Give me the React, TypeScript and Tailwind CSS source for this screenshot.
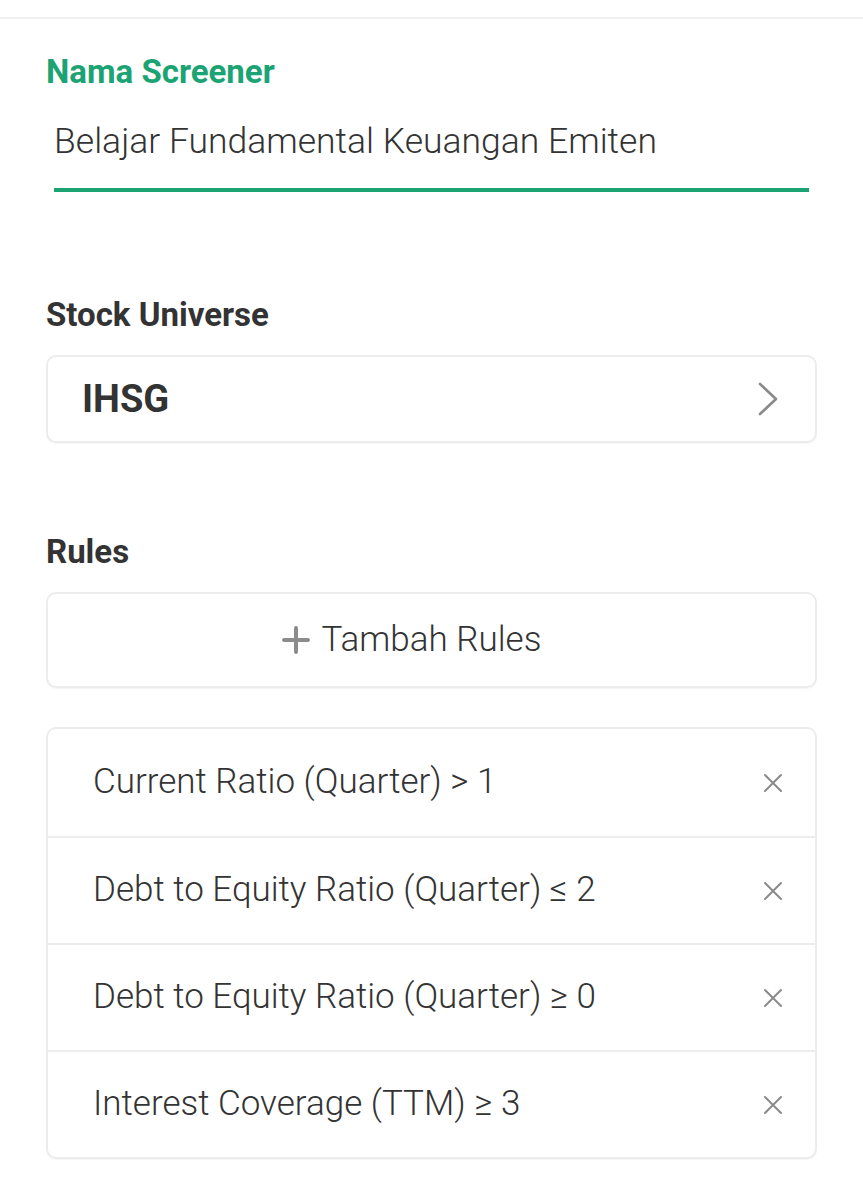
import React from 'react';

const rules = [
  'Current Ratio (Quarter) > 1',
  'Debt to Equity Ratio (Quarter) ≤ 2',
  'Debt to Equity Ratio (Quarter) ≥ 0',
  'Interest Coverage (TTM) ≥ 3',
];

function Chevron() {
  return (
    <svg width="22" height="34" viewBox="0 0 22 34" fill="none">
      <path d="M3 2 L19 17 L3 32" stroke="#8a8a8a" strokeWidth="2.6" strokeLinecap="round" strokeLinejoin="round" />
    </svg>
  );
}

function Plus() {
  return (
    <svg width="28" height="28" viewBox="0 0 28 28" fill="none">
      <path d="M14 2 V26 M2 14 H26" stroke="#8c8c8c" strokeWidth="4" strokeLinecap="round" />
    </svg>
  );
}

function Close() {
  return (
    <svg width="20" height="20" viewBox="0 0 20 20" fill="none">
      <path d="M2 2 L18 18 M18 2 L2 18" stroke="#8a8a8a" strokeWidth="2" strokeLinecap="round" />
    </svg>
  );
}

export default function App() {
  return (
    <div className="min-h-[1200px] bg-white text-[#333333]" style={{ fontFamily: 'Roboto, "Liberation Sans", sans-serif' }}>
      <div className="h-[17px]" />
      <div className="h-[2px] bg-[#efefef]" />

      <div className="px-[46px]">
        {/* Nama Screener */}
        <div className="pt-[35px] text-[33px] font-bold leading-[36px] text-[#1ba373]">Nama Screener</div>
        <div className="px-[8px]">
          <div className="mt-[31px] text-[35.5px] font-light leading-[40px]">Belajar Fundamental Keuangan Emiten</div>
          <div className="mt-[27px] h-[4px] bg-[#1ba373]" />
        </div>

        {/* Stock Universe */}
        <div className="mt-[105px] text-[33px] font-bold leading-[36px]">Stock Universe</div>
        <div className="mt-[22px] flex h-[88px] items-center justify-between rounded-[10px] border-2 border-[#ececec] pl-[34px] pr-[36px] shadow-[0_1px_1px_rgba(0,0,0,0.04)]">
          <span className="text-[38px] font-bold">IHSG</span>
          <Chevron />
        </div>

        {/* Rules */}
        <div className="mt-[91px] text-[33px] font-bold leading-[36px]">Rules</div>
        <div className="mt-[22px] flex h-[96px] items-center justify-center gap-[12px] rounded-[10px] border-2 border-[#ececec] pr-[40px] shadow-[0_1px_1px_rgba(0,0,0,0.04)]">
          <Plus />
          <span className="text-[35px] font-light">Tambah Rules</span>
        </div>

        <div className="mt-[39px] overflow-hidden rounded-[10px] border-2 border-[#ececec] shadow-[0_1px_1px_rgba(0,0,0,0.04)]">
          {rules.map((r, i) => (
            <div
              key={r}
              className={`flex h-[107px] items-center justify-between pl-[45px] pr-[32px] ${i > 0 ? 'border-t-2 border-[#ececec]' : ''}`}
            >
              <span className="text-[35px] font-light">{r}</span>
              <Close />
            </div>
          ))}
        </div>
      </div>
    </div>
  );
}
